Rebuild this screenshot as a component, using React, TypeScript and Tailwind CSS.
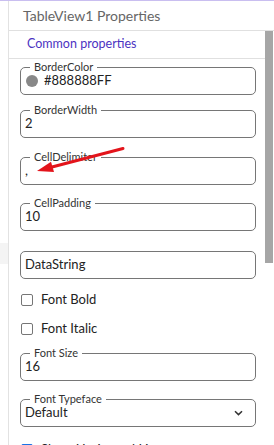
import { ReactNode } from 'react'

const FONT = "font-['Lato','Liberation_Sans',sans-serif]"

function Field({ label, children, className = '' }: { label?: string; children: ReactNode; className?: string }) {
  return (
    <div className={`relative h-[28px] border border-[#767676] rounded-[5px] flex items-center pl-[4px] pr-[12px] ${className}`}>
      {label && (
        <span className="absolute left-[9px] top-[-8px] px-[4px] bg-white text-[11px] leading-[14px] text-[#333]">
          {label}
        </span>
      )}
      {children}
    </div>
  )
}

function Check({ label, checked = false, className = '' }: { label: string; checked?: boolean; className?: string }) {
  return (
    <div className={`h-[20px] flex items-center pl-[1px] ${className}`}>
      <span
        className={`w-[12px] h-[12px] rounded-[2px] border ${
          checked ? 'bg-[#1a73e8] border-[#1a73e8]' : 'border-[#767676] bg-white'
        }`}
      />
      <span className="ml-[8px] text-[13px] text-[#222]">{label}</span>
    </div>
  )
}

export default function App() {
  return (
    <div className={`relative w-[274px] h-[445px] overflow-hidden bg-white flex flex-col ${FONT}`}>
      <div className="h-px shrink-0 bg-[#c9bef0]" />
      <div className="flex flex-1 min-h-0">
        {/* edge of the neighbouring panel */}
        <div className="w-[8px] shrink-0 flex flex-col">
          <div className="h-[242px]" />
          <div className="h-[21px] bg-[#f4f4f4]" />
        </div>

        <div className="flex-1 min-w-0 border-l border-[#e2e2e2] flex flex-col">
          <div className="h-[30px] shrink-0 border-b border-[#e0e0e0] flex items-center pl-[14px]">
            <span className="text-[14px] text-[#666]">TableView1 Properties</span>
          </div>

          <div className="flex flex-1 min-h-0">
            <div className="flex-1 min-w-0 flex flex-col">
              <div className="h-[28px] shrink-0 border-b border-[#e0e0e0] flex items-center pl-[18px]">
                <span className="text-[12.5px] text-[#4b33c2]">Common properties</span>
              </div>

              <div className="flex flex-col pl-[11px] pr-[9px] text-[13px] text-[#222]">
                <Field label="BorderColor" className="mt-[8px]">
                  <span className="ml-[1px] w-[12px] h-[12px] rounded-full bg-[#888888]" />
                  <span className="ml-[6px]">#888888FF</span>
                </Field>
                <Field label="BorderWidth" className="mt-[15px]">
                  2
                </Field>
                <Field label="CellDelimiter" className="mt-[19px]">
                  ,
                </Field>
                <Field label="CellPadding" className="mt-[18px]">
                  10
                </Field>
                <Field className="mt-[20px]">DataString</Field>

                <Check label="Font Bold" className="mt-[11px]" />
                <Check label="Font Italic" className="mt-[9px]" />

                <Field label="Font Size" className="mt-[14px]">
                  16
                </Field>
                <Field label="Font Typeface" className="mt-[18px] justify-between">
                  <span>Default</span>
                  <svg width="9" height="6" viewBox="0 0 9 6" fill="none">
                    <path d="M1 1.2 4.5 4.6 8 1.2" stroke="#333" strokeWidth="1.5" />
                  </svg>
                </Field>

                <Check label="Show Horizontal Lines" checked className="mt-[13px]" />
              </div>
            </div>

            <div className="w-[9px] shrink-0">
              <div className="w-[8px] h-[232px] bg-[#a6a6a6]" />
            </div>
          </div>
        </div>
      </div>

      {/* red annotation arrow */}
      <svg className="absolute left-0 top-0 pointer-events-none" width="274" height="445">
        <line x1="123" y1="148.5" x2="52" y2="167" stroke="#e3141b" strokeWidth="3" strokeLinecap="round" />
        <polygon points="37,171 51,161.8 54,172" fill="#e3141b" />
      </svg>
    </div>
  )
}
